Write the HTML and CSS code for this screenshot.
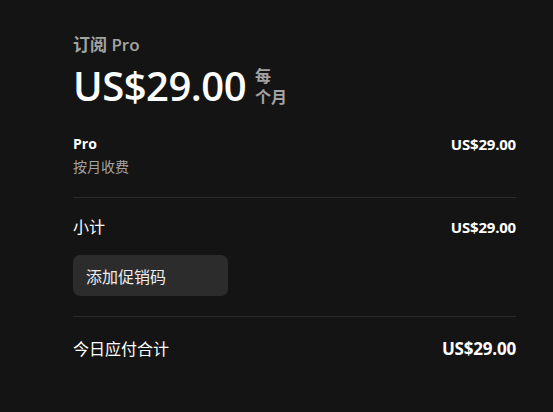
FILE: index.html
```html
<!DOCTYPE html>
<html lang="zh-CN">
<head>
<meta charset="utf-8">
<link rel="stylesheet" href="styles.css">
</head>
<body>
<main class="summary">
  <div class="product-title">订阅 Pro</div>
  <div class="price-line">
    <span class="price">US$29.00</span>
    <span class="period">每<br>个月</span>
  </div>
  <div class="row item">
    <div class="item-info">
      <div class="item-name">Pro</div>
      <div class="item-sub">按月收费</div>
    </div>
    <div class="amount">US$29.00</div>
  </div>
  <div class="divider"></div>
  <div class="row subtotal">
    <div class="label">小计</div>
    <div class="amount">US$29.00</div>
  </div>
  <button class="promo">添加促销码</button>
  <div class="divider second"></div>
  <div class="row total">
    <div class="label">今日应付合计</div>
    <div class="amount big">US$29.00</div>
  </div>
</main>
</body>
</html>
```

FILE: styles.css
```css
html, body {
  margin: 0;
  padding: 0;
  background: #141414;
  height: 100%;
}
body {
  font-family: "Open Sans", "Noto Sans CJK SC", sans-serif;
  color: #ffffff;
}
.summary {
  width: 443px;
  padding: 35px 0 0 73px;
}
.product-title {
  font-size: 17px;
  line-height: 20px;
  font-weight: 600;
  color: #a3a3a3;
}
.price-line {
  display: flex;
  align-items: center;
  gap: 9px;
  margin-top: 6px;
}
.price {
  font-size: 40px;
  line-height: 50px;
  font-weight: 600;
  letter-spacing: -0.5px;
}
.period {
  font-size: 16px;
  line-height: 21px;
  font-weight: 700;
  color: #a3a3a3;
  padding-top: 2px;
}
.row {
  display: flex;
  justify-content: space-between;
  align-items: flex-start;
}
.item {
  margin-top: 23px;
}
.item-name {
  font-size: 14px;
  line-height: 20px;
  font-weight: 700;
}
.item-sub {
  font-size: 14px;
  line-height: 18px;
  color: #a3a3a3;
  margin-top: 4px;
}
.amount {
  font-size: 15px;
  line-height: 20px;
  font-weight: 700;
  letter-spacing: -0.2px;
}
.amount.big {
  font-size: 17px;
  line-height: 22px;
}
.divider {
  height: 1px;
  background: #2b2b2b;
  margin-top: 21px;
}
.subtotal {
  margin-top: 19px;
  align-items: center;
}
.label {
  font-size: 16px;
  line-height: 20px;
}
.promo {
  display: block;
  margin-top: 18px;
  width: 155px;
  height: 41px;
  border: none;
  border-radius: 7px;
  background: #2c2c2c;
  color: #ececec;
  font-family: inherit;
  font-size: 16px;
  text-align: left;
  padding: 0 0 0 13px;
}
.divider.second {
  margin-top: 20px;
}
.total {
  margin-top: 21px;
  align-items: center;
}
```
